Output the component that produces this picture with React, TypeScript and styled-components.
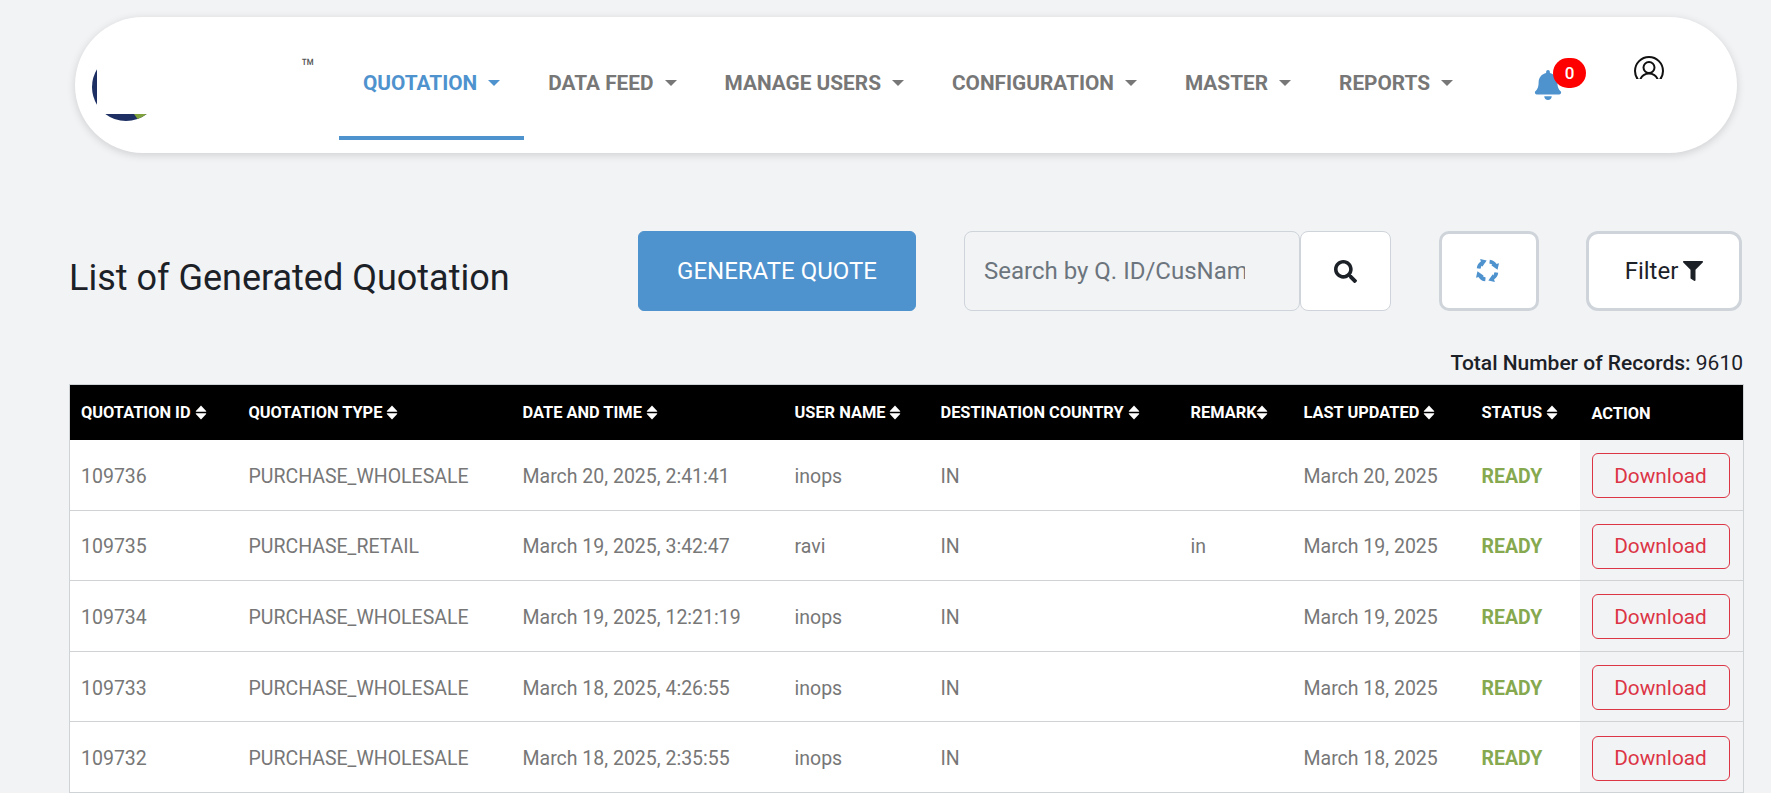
import React from 'react'
import styled, { createGlobalStyle } from 'styled-components'
import { FaBell, FaFilter, FaSearch } from 'react-icons/fa'

const columns = [
    { label: 'QUOTATION ID', width: 168 },
    { label: 'QUOTATION TYPE', width: 274 },
    { label: 'DATE AND TIME', width: 272 },
    { label: 'USER NAME', width: 146 },
    { label: 'DESTINATION COUNTRY', width: 250 },
    { label: 'REMARK', width: 113, tight: true },
    { label: 'LAST UPDATED', width: 178 },
    { label: 'STATUS', width: 109 },
]

const rows = [
    ['109736', 'PURCHASE_WHOLESALE', 'March 20, 2025, 2:41:41', 'inops', 'IN', '', 'March 20, 2025'],
    ['109735', 'PURCHASE_RETAIL', 'March 19, 2025, 3:42:47', 'ravi', 'IN', 'in', 'March 19, 2025'],
    ['109734', 'PURCHASE_WHOLESALE', 'March 19, 2025, 12:21:19', 'inops', 'IN', '', 'March 19, 2025'],
    ['109733', 'PURCHASE_WHOLESALE', 'March 18, 2025, 4:26:55', 'inops', 'IN', '', 'March 18, 2025'],
    ['109732', 'PURCHASE_WHOLESALE', 'March 18, 2025, 2:35:55', 'inops', 'IN', '', 'March 18, 2025'],
]

const menu = ['QUOTATION', 'DATA FEED', 'MANAGE USERS', 'CONFIGURATION', 'MASTER', 'REPORTS']

const App = () => {
    return (
        <Page>
            <GlobalStyle />
            <Navbar>
                <Brand>
                    <svg width="60" height="60" viewBox="0 0 60 60">
                        <path d="M5 3.3 A34 34 0 0 0 5 38.7 Z" fill="#1d2f63" />
                        <path d="M13.3 48 A34 34 0 0 0 54.7 48 Z" fill="#1d2f63" />
                        <path d="M42 48 L54.7 48 A34 34 0 0 1 45.5 53 Z" fill="#7fa23c" />
                    </svg>
                    <Trademark>™</Trademark>
                </Brand>
                <Menu>
                    {menu.map((item, i) => (
                        <MenuItem key={item} $active={i === 0}>
                            {item}
                            <Caret />
                        </MenuItem>
                    ))}
                </Menu>
                <BellBox>
                    <FaBell size={30} />
                    <Badge>0</Badge>
                </BellBox>
                <UserBox>
                    <svg width="30" height="30" viewBox="0 0 30 30" fill="none" stroke="#111" strokeWidth="2">
                        <circle cx="15" cy="15" r="14" />
                        <circle cx="15" cy="11.5" r="5.5" />
                        <path d="M6 24 C7.5 20 11 17.5 15 17.5 C19 17.5 22.5 20 24 24" />
                    </svg>
                </UserBox>
            </Navbar>

            <Toolbar>
                <Title>List of Generated Quotation</Title>
                <GenerateButton>GENERATE QUOTE</GenerateButton>
                <SearchInput placeholder="Search by Q. ID/CusName" />
                <SearchButton>
                    <FaSearch size={23} />
                </SearchButton>
                <RefreshButton>
                    <svg width="23" height="23" viewBox="0 0 22 22" fill="#4e92ce">
                        {[0, 90, 180, 270].map((deg) => (
                            <g key={deg} transform={`rotate(${deg} 11 11)`}>
                                <path d="M2.5 9 C2.8 6.5 3.8 5 6 3.8" fill="none" stroke="#4e92ce" strokeWidth="3.6" />
                                <polygon points="4,0 10.2,1.4 6,7.4" />
                            </g>
                        ))}
                    </svg>
                </RefreshButton>
                <FilterButton>
                    Filter <FaFilter size={20} />
                </FilterButton>
            </Toolbar>

            <Records>
                <b>Total Number of Records:</b> 9610
            </Records>

            <Table>
                <colgroup>
                    {columns.map((c) => (
                        <col key={c.label} width={c.width} />
                    ))}
                    <col />
                </colgroup>
                <thead>
                    <tr>
                        {columns.map((c) => (
                            <Th key={c.label}>
                                {c.label}
                                <SortIcon $tight={c.tight} viewBox="0 0 12 16">
                                    <path d="M6 0.5 L11.5 6.5 Q12 7.2 11 7.2 L1 7.2 Q0 7.2 0.5 6.5 Z" />
                                    <path d="M6 15.5 L11.5 9.5 Q12 8.8 11 8.8 L1 8.8 Q0 8.8 0.5 9.5 Z" />
                                </SortIcon>
                            </Th>
                        ))}
                        <ActionTh>ACTION</ActionTh>
                    </tr>
                </thead>
                <tbody>
                    {rows.map((row) => (
                        <tr key={row[0]}>
                            {row.map((cell, i) => (
                                <Td key={i}>{cell}</Td>
                            ))}
                            <Td>
                                <Ready>READY</Ready>
                            </Td>
                            <ActionTd>
                                <DownloadButton>Download</DownloadButton>
                            </ActionTd>
                        </tr>
                    ))}
                </tbody>
            </Table>
        </Page>
    )
}

export default App

const GlobalStyle = createGlobalStyle`
html, body {
    margin: 0;
    padding: 0;
    height: 793px;
    overflow: hidden;
    background: #f2f3f5;
    font-family: Roboto, "Liberation Sans", sans-serif;
}
* {
    box-sizing: border-box;
}
`
const Page = styled.div`
padding: 17px 28px 0 69px;
`
const Navbar = styled.div`
margin: 0 6px;
height: 136px;
background: #fff;
border-radius: 68px;
box-shadow: 0 2px 8px rgba(0, 0, 0, 0.15);
display: flex;
align-items: stretch;
`
const Brand = styled.div`
width: 264px;
padding: 49px 0 0 17px;
position: relative;
flex-shrink: 0;
`
const Trademark = styled.span`
position: absolute;
left: 226px;
top: 38px;
font-size: 23px;
line-height: 26px;
color: #555;
`
const Menu = styled.div`
display: flex;
align-items: stretch;
`
const MenuItem = styled.div<{ $active?: boolean }>`
display: flex;
align-items: center;
padding: 12px 24px 0;
margin-bottom: 13px;
font-size: 20.8px;
font-weight: 700;
color: ${(p) => (p.$active ? '#4e92ce' : '#777')};
border-bottom: 4px solid ${(p) => (p.$active ? '#4e92ce' : 'transparent')};
`
const Caret = styled.span`
margin-left: 11px;
width: 0;
height: 0;
border-left: 6px solid transparent;
border-right: 6px solid transparent;
border-top: 6px solid currentColor;
`
const BellBox = styled.div`
margin: 53px 0 0 56px;
position: relative;
width: 40px;
color: #4e92ce;
`
const Badge = styled.span`
position: absolute;
left: 20px;
top: -12px;
width: 33px;
height: 30px;
border-radius: 15px;
background: #f00;
color: #fff;
font-size: 17px;
font-weight: 500;
display: flex;
align-items: center;
justify-content: center;
`
const UserBox = styled.div`
margin: 39px 0 0 61px;
width: 30px;
height: 23px;
overflow: hidden;
`
const Toolbar = styled.div`
margin-top: 78px;
height: 80px;
display: flex;
align-items: center;
`
const Title = styled.h1`
margin: 14px 0 0;
width: 569px;
font-size: 36px;
font-weight: 400;
color: #1c2128;
white-space: nowrap;
`
const GenerateButton = styled.button`
width: 278px;
height: 80px;
border: 1px solid #4e92ce;
border-radius: 6px;
background: #4e92ce;
color: #fff;
font: 400 24px Roboto, sans-serif;
`
const SearchInput = styled.input`
margin-left: 48px;
width: 336px;
height: 80px;
padding: 0 54px 0 19px;
border: 1px solid #ced4da;
border-radius: 8px;
background: #f2f3f5;
font: 400 24px Roboto, sans-serif;
color: #777;
&::placeholder {
    color: #6c757d;
}
`
const SearchButton = styled.button`
width: 91px;
height: 80px;
border: 1px solid #ced4da;
border-radius: 8px;
background: #fff;
color: #1c2128;
display: flex;
align-items: center;
justify-content: center;
`
const RefreshButton = styled.button`
margin-left: 48px;
width: 100px;
height: 80px;
padding: 0 3px 2px 0;
border: 3px solid #ced4da;
border-radius: 10px;
background: #fff;
display: flex;
align-items: center;
justify-content: center;
`
const FilterButton = styled.button`
margin-left: 47px;
width: 156px;
height: 80px;
border: 3px solid #ced4da;
border-radius: 12px;
background: #fff;
color: #1c2128;
font: 400 24px Roboto, sans-serif;
display: flex;
align-items: center;
justify-content: center;
gap: 5px;
`
const Records = styled.div`
margin-top: 39px;
height: 26px;
text-align: right;
font-size: 21px;
line-height: 26px;
color: #1c2128;
b {
    font-weight: 500;
}
`
const Table = styled.table`
margin-top: 8px;
width: 1675px;
table-layout: fixed;
border-collapse: collapse;
border: 1px solid #d0d3d6;
`
const Th = styled.th`
height: 55px;
padding: 0 11px;
background: #000;
color: #fff;
font-size: 16.4px;
font-weight: 700;
text-align: left;
white-space: nowrap;
`
const ActionTh = styled(Th)`
padding: 2px 12px 0;
`
const SortIcon = styled.svg<{ $tight?: boolean }>`
margin-left: ${(p) => (p.$tight ? '-1px' : '4px')};
width: 12px;
height: 15px;
vertical-align: -2px;
fill: #fff;
`
const Td = styled.td`
height: 70.6px;
padding: 3px 11px 0;
background: #fff;
border-bottom: 1px solid #d0d3d6;
font-size: 19.5px;
color: #777;
white-space: nowrap;
`
const ActionTd = styled(Td)`
padding: 2px 12px 0;
background: #f2f3f5;
`
const Ready = styled.span`
font-weight: 700;
color: #86a94f;
`
const DownloadButton = styled.button`
width: 138px;
height: 45px;
border: 1px solid #dc3545;
border-radius: 6px;
background: transparent;
color: #dc3545;
font: 400 20.8px Roboto, sans-serif;
`
